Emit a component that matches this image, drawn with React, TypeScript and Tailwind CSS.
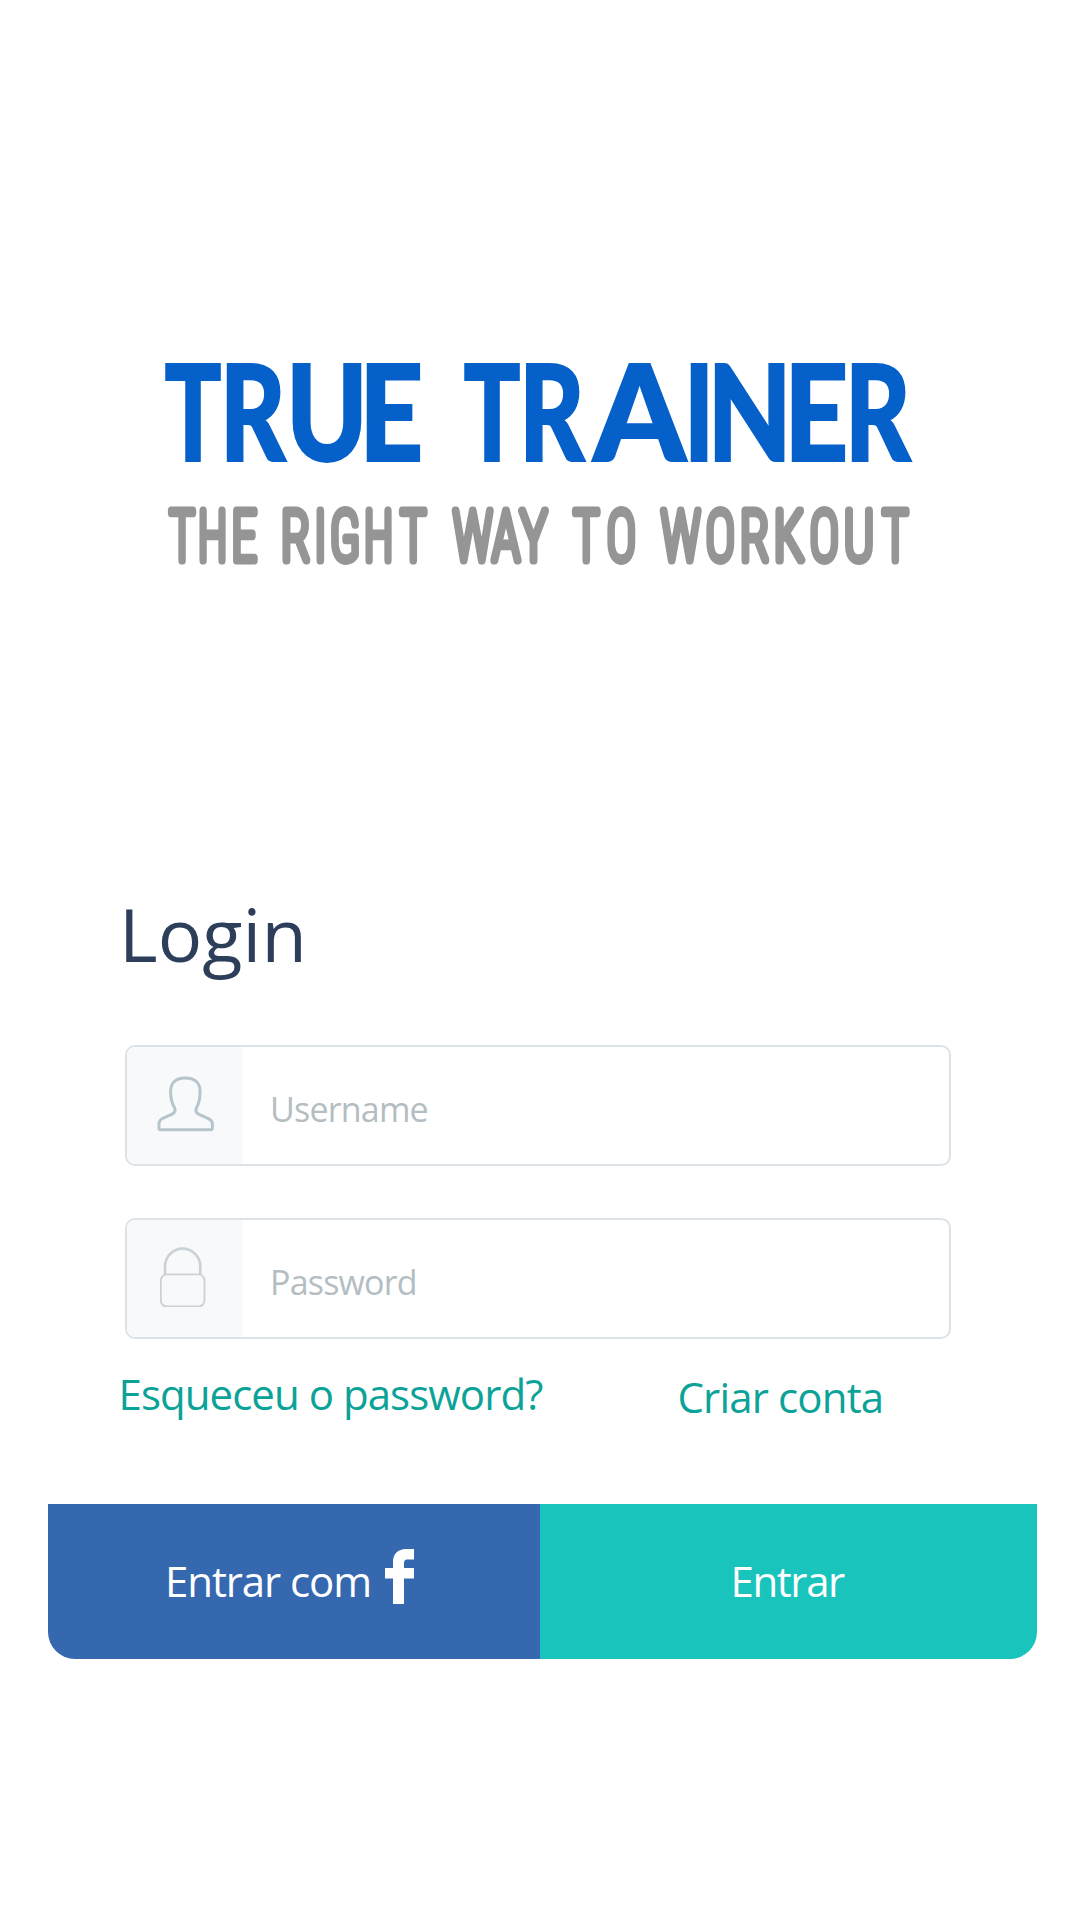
type Glyph = [char: string, left: number, right: number];
type Metrics = Record<string, [left: number, right: number, advance: number]>;

// left ink edge, right ink edge and advance of each capital, in em
const LATO: Metrics = {
  T: [0.012, 0.592, 0.604], R: [0.069, 0.655, 0.6495], U: [0.062, 0.683, 0.7455], E: [0.069, 0.537, 0.574],
  A: [-0.002, 0.704, 0.702], I: [0.069, 0.234, 0.303], N: [0.069, 0.704, 0.7735],
};
const ROBOTO: Metrics = {
  T: [0.025, 0.5, 0.525], H: [0.082, 0.531, 0.614], E: [0.082, 0.465, 0.501], R: [0.082, 0.512, 0.571],
  I: [0.097, 0.141, 0.24], G: [0.07, 0.528, 0.601], W: [0.031, 0.757, 0.786], A: [0.016, 0.512, 0.528],
  Y: [0.012, 0.512, 0.525], O: [0.062, 0.523, 0.584], K: [0.082, 0.531, 0.556], U: [0.074, 0.508, 0.583],
};

const TITLE: Glyph[] = [
  ["T", 165, 221], ["R", 226, 287], ["U", 292, 361.7], ["E", 366, 420],
  ["T", 464, 520], ["R", 525.3, 586], ["A", 592, 687], ["I", 690, 708],
  ["N", 714, 785], ["E", 791, 845], ["R", 851, 912],
];
const TAGLINE: Glyph[] = [
  ["T", 167.5, 196.5], ["H", 199, 226], ["E", 232.5, 258],
  ["R", 282, 310.5], ["I", 316, 324.5], ["G", 330.5, 359.5], ["H", 365, 392], ["T", 398.5, 428],
  ["W", 451.5, 494], ["A", 490, 522], ["Y", 517.5, 549.5],
  ["T", 571.5, 601], ["O", 607, 635.5],
  ["W", 659.5, 702], ["O", 706, 734.5], ["R", 741, 769.5], ["K", 775, 806], ["O", 810, 838.5],
  ["U", 844.5, 873.5], ["T", 880.5, 910],
];

function Glyphs({ glyphs, metrics, size, outline = 0 }: { glyphs: Glyph[]; metrics: Metrics; size: number; outline?: number }) {
  return glyphs.map(([ch, l, r], i) => {
    const [a, b, adv] = metrics[ch];
    const k = (r - l) / ((b - a) * size + outline);
    return (
      <tspan key={i} x={l - (a * size - outline / 2) * k} textLength={adv * size * k} lengthAdjust="spacingAndGlyphs">
        {ch}
      </tspan>
    );
  });
}

function Logo() {
  return (
    <svg viewBox="0 0 1080 897" className="h-[897px] w-[1080px] shrink-0" aria-label="TRUE TRAINER">
      <text y="461.2" fontSize="134" fill="#0660ca" stroke="#0660ca" strokeWidth="1.8" className="font-['Lato'] font-black">
        <Glyphs glyphs={TITLE} metrics={LATO} size={134} outline={1.8} />
      </text>
      <text
        y="560.4"
        fontSize="69"
        fill="#959595"
        stroke="#959595"
        strokeWidth="9"
        strokeLinejoin="round"
        className="font-['Roboto_Condensed'] font-thin"
      >
        <Glyphs glyphs={TAGLINE} metrics={ROBOTO} size={69} outline={9} />
      </text>
    </svg>
  );
}

function UserIcon() {
  return (
    <svg viewBox="171 590 172 167" className="mb-[3px] h-[56px] w-[57px]" fill="none" stroke="#b6c4cc" strokeWidth="9" strokeLinejoin="round">
      <path d="M256 595C226 595 212 612 212 635C212 660 216 672 224 685C228 694 225 700 215 705L190 716C180 720 177 726 177 734V747Q177 751 181 751H334Q338 751 338 747V734C338 726 333 720 323 716L298 705C288 700 286 694 290 685C298 672 301 660 301 635C301 612 287 595 256 595Z" />
    </svg>
  );
}

function LockIcon() {
  return (
    <svg viewBox="180 140 136 182" className="mr-[4px] mb-[3px] h-[60.7px] w-[45.3px]" fill="none" stroke="#c9d2d7">
      <path d="M195 222V198A53 53 0 0 1 301 198V222" strokeWidth="8" />
      <rect x="182.5" y="222" width="131" height="96.5" rx="18" strokeWidth="5.5" />
    </svg>
  );
}

function Field({ icon, label }: { icon: React.ReactNode; label: string }) {
  return (
    <div className="flex h-[121px] w-[826px] items-center overflow-hidden rounded-[10px] border-2 border-[#dce3e6] bg-white">
      <div className="flex h-full w-[116px] shrink-0 items-center justify-center bg-[#f8f9fb]">{icon}</div>
      <span className="pt-[6px] pl-[27px] text-[34px] leading-none tracking-[-0.8px] text-[#b3bdc2]">{label}</span>
    </div>
  );
}

export default function App() {
  return (
    <main className="flex h-[1920px] w-[1080px] flex-col bg-white font-['Open_Sans',sans-serif]">
      <Logo />
      <h1 className="ml-[119px] h-[148px] text-[74px] leading-none font-[440] tracking-[0.1px] text-[#2c3e59]">Login</h1>
      <form className="ml-[125px] flex flex-col gap-[52px]">
        <Field icon={<UserIcon />} label="Username" />
        <Field icon={<LockIcon />} label="Password" />
      </form>
      <div className="mt-[34px] ml-[118.5px] flex h-[131px] items-start text-[42px] leading-none text-[#0ba297]">
        <a className="w-[559px] tracking-[-0.95px]">Esqueceu o password?</a>
        <a className="pt-[3px] tracking-[-0.85px]">Criar conta</a>
      </div>
      <div className="ml-[48px] flex h-[155px] w-[989px] overflow-hidden rounded-b-[27px] text-[42px] leading-none text-white">
        <button className="flex w-[492px] items-start bg-[#3568af] pl-[117px]">
          <span className="mt-[56px] w-[220px] text-left tracking-[-1.1px]">Entrar com</span>
          <svg viewBox="0 0 29 55" className="mt-[45px] h-[55px] w-[29px]" fill="white">
            <path d="M29 0H21C13 0 8 5 8 13V19H0V29.5H8V55H19V29.5H29V19H19V14Q19 10.5 22 10.5H29Z" />
          </svg>
        </button>
        <button className="flex flex-1 items-start bg-[#19c4bc] pl-[190.5px]">
          <span className="mt-[56px] tracking-[-1.4px]">Entrar</span>
        </button>
      </div>
    </main>
  );
}
